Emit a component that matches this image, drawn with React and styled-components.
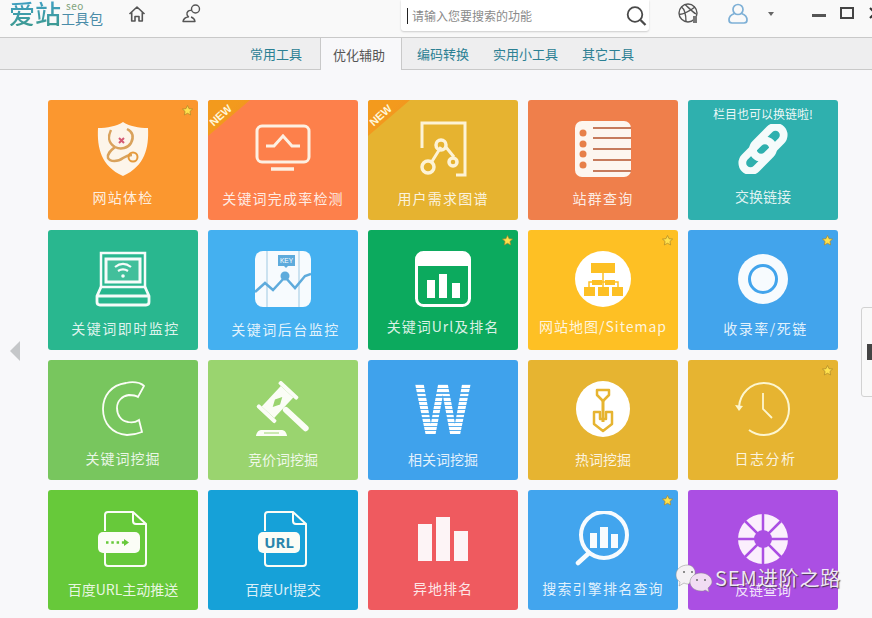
import React from 'react';
import styled, { createGlobalStyle } from 'styled-components';

const GlobalStyle = createGlobalStyle`
  html, body {
    margin: 0;
    padding: 0;
    background: #f8f8fa;
  }
  body {
    font-family: "Noto Sans CJK SC", "Noto Sans", "Liberation Sans", sans-serif;
  }
`;

const Page = styled.div`
  position: relative;
  width: 872px;
  height: 618px;
  overflow: hidden;
  background: #f8f8fa;
`;

const Header = styled.header`
  display: flex;
  align-items: flex-start;
  height: 37px;
  background: #f9f9f9;
  border-bottom: 1px solid #c9c9c9;
`;

const Logo = styled.div`
  display: flex;
  align-items: flex-start;
  flex: none;
  width: 119px;
  height: 26px;
  margin-left: 9px;
`;

const LogoMain = styled.span`
  font-size: 26px;
  line-height: 26px;
  font-weight: 500;
  background: linear-gradient(180deg, #3f9fc4, #3d9a92);
  -webkit-background-clip: text;
  background-clip: text;
  color: transparent;
`;

const LogoSide = styled.div`
  display: flex;
  flex-direction: column;
  align-items: flex-start;
`;

const LogoSeo = styled.span`
  margin-left: 5px;
  font-size: 10px;
  letter-spacing: 0.5px;
  line-height: 11px;
  color: #7da27a;
`;

const LogoSub = styled.span`
  font-size: 14px;
  line-height: 15px;
  color: #4a8ca8;
`;

const TopIcon = styled.svg`
  flex: none;
  display: block;
  margin-top: ${({ $top }) => $top}px;
  margin-left: ${({ $left }) => $left}px;
  color: ${({ $color }) => $color || '#555'};
`;

const SearchBox = styled.div`
  display: flex;
  align-items: center;
  flex: none;
  width: 248px;
  height: 31px;
  margin-left: 199px;
  padding: 0 2px 0 6px;
  box-sizing: border-box;
  background: #fff;
  border-radius: 0 0 3px 3px;
  box-shadow: 0 1px 2px rgba(0, 0, 0, 0.18);
`;

const Caret = styled.span`
  width: 1px;
  height: 16px;
  margin-right: 4px;
  background: #222;
`;

const SearchText = styled.span`
  flex: 1;
  font-size: 12px;
  line-height: 16px;
  color: #8a8a8a;
`;

const TabBar = styled.nav`
  display: flex;
  height: 31px;
  padding-left: 238px;
  background: #eeeeef;
  border-bottom: 1px solid #c9c9c9;
`;

const Tab = styled.div`
  display: flex;
  align-items: center;
  font-size: 13px;
  color: ${({ $active }) => ($active ? '#555' : '#2b8093')};
  padding: ${({ $active }) => ($active ? '0 16px 0 12px' : '0 12px')};
  margin: ${({ $active }) => ($active ? '0 3px 0 6px' : '0')};
  height: ${({ $active }) => ($active ? '32px' : '31px')};
  box-sizing: border-box;
  background: ${({ $active }) => ($active ? '#f8f8fa' : 'transparent')};
  border-left: ${({ $active }) => ($active ? '1px solid #c9c9c9' : 'none')};
  border-right: ${({ $active }) => ($active ? '1px solid #c9c9c9' : 'none')};
`;

const Grid = styled.main`
  display: grid;
  grid-template-columns: repeat(5, 150px);
  grid-auto-rows: 120px;
  gap: 10px;
  padding: 30px 0 0 48px;
`;

const Card = styled.div`
  position: relative;
  display: flex;
  flex-direction: column;
  align-items: center;
  overflow: hidden;
  padding-top: 21px;
  box-sizing: border-box;
  border-radius: 3px;
  background: ${({ $bg }) => $bg};
`;

const IconBox = styled.div`
  display: flex;
  align-items: center;
  justify-content: center;
  width: 56px;
  height: 56px;
  flex: none;
`;

const Label = styled.div`
  margin-top: ${({ $drop }) => 11 + $drop}px;
  margin-left: ${({ $shift }) => $shift}px;
  font-size: 14px;
  line-height: 20px;
  white-space: nowrap;
  letter-spacing: ${({ $spread }) => $spread}px;
  color: rgba(255, 255, 255, 0.86);
`;

const Notice = styled.div`
  position: absolute;
  top: 5px;
  left: 0;
  right: 0;
  text-align: center;
  font-size: 12px;
  line-height: 17px;
  color: rgba(255, 255, 255, 0.92);
`;

const Ribbon = styled.div`
  position: absolute;
  top: 0;
  left: 0;
  width: 42px;
  height: 36px;
  clip-path: polygon(0 0, 100% 0, 0 100%);
  background: linear-gradient(135deg, #f39a1d 40%, #ef8f24 100%);
`;

const RibbonText = styled.span`
  position: absolute;
  top: 9px;
  left: 0;
  transform: rotate(-42deg);
  font-family: "Liberation Sans", sans-serif;
  font-size: 11px;
  line-height: 13px;
  font-weight: 700;
  color: #fff6d8;
`;

const Star = styled.svg`
  position: absolute;
  top: 5px;
  right: 5px;
`;

const WordIcon = styled.span`
  display: block;
  font-family: "Liberation Sans", sans-serif;
  font-size: 72px;
  line-height: 56px;
  font-weight: 700;
  transform: scaleX(0.82);
  color: transparent;
  background: repeating-linear-gradient(180deg, #ffffff 0 2.9px, rgba(255, 255, 255, 0.15) 2.9px 4.2px);
  -webkit-background-clip: text;
  background-clip: text;
`;

const LeftArrow = styled.div`
  position: absolute;
  left: 10px;
  top: 341px;
  width: 0;
  height: 0;
  border-top: 10px solid transparent;
  border-bottom: 10px solid transparent;
  border-right: 10px solid #c5c7c9;
`;

const RightHandle = styled.div`
  position: absolute;
  left: 861px;
  top: 307px;
  width: 20px;
  height: 88px;
  border: 1px solid #d2d2d2;
  border-radius: 3px;
  background: #f9f9f9;
`;

const HandleMark = styled.span`
  position: absolute;
  left: 5px;
  top: 36px;
  width: 5px;
  height: 16px;
  background: #444;
`;

const Watermark = styled.div`
  position: absolute;
  left: 675px;
  top: 564px;
  display: flex;
  align-items: center;
  gap: 2px;
  font-size: 20px;
  line-height: 28px;
  letter-spacing: 0.9px;
  color: rgba(255, 255, 255, 0.88);
  text-shadow: 1px 1px 1px rgba(50, 50, 50, 0.8);
  white-space: nowrap;
`;

const HomeIcon = () => (
  <TopIcon $top={5} $left={0} width="18" height="18" viewBox="0 0 18 18" fill="none" stroke="currentColor" strokeWidth="1.6" strokeLinejoin="round">
    <path d="M1.5 9 9 2l7.500 7M3.700 7.500V16h3.300v-4.500h4V16h3.300V7.500" />
  </TopIcon>
);

const PeopleIcon = () => (
  <TopIcon $top={4} $left={36} width="20" height="19" viewBox="0 0 20 19" fill="none" stroke="currentColor" strokeWidth="1.4">
    <circle cx="13.500" cy="5" r="4" />
    <path d="M9.500 6.500C6.500 6 4.500 8 5 10.500c.2 1 .8 1.800 1.500 2.300C4 13.300 1.500 14.800 1 17.500h12c-.3-2.200-2-3.800-4-4.500" strokeLinejoin="round" />
  </TopIcon>
);

const SearchIcon = () => (
  <svg width="21" height="20" viewBox="0 0 21 20" fill="none" stroke="#4a4a4a" strokeWidth="1.800">
    <circle cx="9" cy="8.500" r="7.300" />
    <path d="m14.500 14 5 5" strokeWidth="2.300" />
  </svg>
);

const BallIcon = () => (
  <TopIcon $top={3} $left={29} width="21" height="21" viewBox="0 0 21 21" fill="none" stroke="#555" strokeWidth="1.400">
    <circle cx="10" cy="10" r="9" />
    <path d="M3.500 4c3 2 4.500 6 4.500 15M17 4C13 7 6 11 1 11.500M7 1.500c3 2.500 7 7 11 9.500" />
    <rect x="15" y="13" width="4" height="7" fill="#777" stroke="none" />
  </TopIcon>
);

const UserIcon = () => (
  <TopIcon $top={3} $left={29} width="20" height="21" viewBox="0 0 20 21" fill="none" stroke="#7eb0d6" strokeWidth="1.700">
    <circle cx="10" cy="6.500" r="5" />
    <path d="M6.500 10.500C3.500 11.500 1 14 1 17c0 2 1.500 3 3 3h12c1.500 0 3-1 3-3 0-3-2.500-5.500-5.500-6.500" />
  </TopIcon>
);

const CaretIcon = () => (
  <TopIcon $top={12} $left={20} width="6" height="4" viewBox="0 0 6 4">
    <path d="M0 0h6L3 4z" fill="#666" />
  </TopIcon>
);

const MinIcon = () => (
  <TopIcon $top={14} $left={38} width="14" height="3" viewBox="0 0 14 3">
    <rect width="14" height="3" fill="#555" />
  </TopIcon>
);

const MaxIcon = () => (
  <TopIcon $top={7} $left={14} width="14" height="12" viewBox="0 0 14 12" fill="none" stroke="#444" strokeWidth="2">
    <rect x="1" y="1" width="12" height="10" />
  </TopIcon>
);

const CloseIcon = () => (
  <TopIcon $top={7} $left={15} width="12" height="12" viewBox="0 0 12 12" fill="none" stroke="#333" strokeWidth="2">
    <path d="m1 1 10 10M11 1 1 11" />
  </TopIcon>
);

const StarMark = () => (
  <Star width="11" height="11" viewBox="0 0 24 24">
    <path d="m12 1 3.300 7 7.700.9-5.700 5.200 1.600 7.600L12 18l-6.900 3.700 1.600-7.600L1 8.900 8.700 8z" fill="#ffe14d" stroke="#a9862a" strokeWidth="1.500" />
  </Star>
);

const ShieldIcon = () => (
  <svg width="52" height="56" viewBox="0 0 52 56" fill="none">
    <path d="M26 1c6 4 16 6 25 6 1 20-3 38-25 48C4 45 0 27 1 7c9 0 19-2 25-6z" fill="#fdf5ea" />
    <path d="M14 9c-3 6-3 13 4 17 6 3 13 1 16-4 3-6 2-11-4-14" stroke="#d9a25c" strokeWidth="2.500" />
    <path d="M18 26c-5 4-8 7-7 11 2 4 10 4 15 0 3-2 5-3 9-3" stroke="#d9a25c" strokeWidth="2.500" />
    <circle cx="36" cy="36" r="4.500" stroke="#e59a3c" strokeWidth="2" />
    <path d="m22 17 5 5M27 17l-5 5" stroke="#d45a74" strokeWidth="2" />
  </svg>
);

const MonitorIcon = () => (
  <svg width="56" height="50" viewBox="0 0 56 50" fill="none" stroke="#fdf0e2">
    <rect x="2" y="2" width="52" height="36" rx="5" strokeWidth="3" />
    <path d="M11 22h8l9-10 9 10h8" strokeWidth="3" />
    <path d="M16 45h23" strokeWidth="3.500" />
  </svg>
);

const GraphIcon = () => (
  <svg width="47" height="56" viewBox="0 0 47 56" fill="none" stroke="#fdf3d6" strokeWidth="3">
    <path d="M2 27V2h43v52h-9" />
    <path d="m11 42 10-16M25 25l9 11" />
    <circle cx="8" cy="46" r="6" strokeWidth="3.500" />
    <circle cx="21" cy="24" r="5" strokeWidth="3.500" />
    <circle cx="33" cy="41" r="4" strokeWidth="3.500" />
  </svg>
);

const ListIcon = () => (
  <svg width="56" height="56" viewBox="0 0 56 56">
    <rect width="56" height="56" rx="7" fill="#fdf6ef" />
    {[12, 23, 33, 44].map((y) => (
      <circle key={y} cx="8" cy={y} r="3.500" fill="#e78049" />
    ))}
    {[7, 17, 28, 39, 50].map((y) => (
      <rect key={y} x="18" y={y - 1} width="38" height="2" fill="#c67b5c" />
    ))}
  </svg>
);

const ChainIcon = () => (
  <svg width="58" height="50" viewBox="0 0 58 50" fill="none" stroke="#f5fbfb" strokeWidth="8">
    <rect x="26" y="-1" width="17" height="38" rx="8.500" transform="rotate(45 34.500 18)" />
    <rect x="15" y="13" width="17" height="38" rx="8.500" transform="rotate(45 23.500 32)" />
  </svg>
);

const LaptopIcon = () => (
  <svg width="56" height="56" viewBox="0 0 56 56" fill="none" stroke="#f6fcfa" strokeWidth="2.500">
    <rect x="6" y="2" width="44" height="34" />
    <rect x="11" y="8" width="34" height="23" fill="#f6fcfa" fillOpacity="0.12" strokeWidth="3" />
    <path d="M20 16c5-4 11-4 16 0M23 20c3-2 7-2 10 0" strokeWidth="2.200" />
    <circle cx="28" cy="25" r="1.800" fill="#f6fcfa" stroke="none" />
    <path d="m6 36-4 9v6c0 2 1 3 3 3h46c2 0 3-1 3-3v-6l-4-9M2 45h52" strokeWidth="2.800" />
  </svg>
);

const ChartCardIcon = () => (
  <svg width="56" height="56" viewBox="0 0 56 56" fill="none">
    <rect width="56" height="56" rx="8" fill="#f7fbfe" />
    <path d="M12 0v56M44 0v56" stroke="#9fc9e2" strokeWidth="1" />
    <path d="M0 41 10 32l8 7 12-13 10 11 10-12 6-2" stroke="#5eabdc" strokeWidth="2.500" />
    <circle cx="30" cy="25" r="4.500" fill="#5eabdc" />
    <rect x="23" y="4" width="17" height="11" fill="#5eabdc" />
    <path d="m29 15 2 2 2-2z" fill="#5eabdc" />
    <text x="31.500" y="12" textAnchor="middle" fontSize="6.500" fontFamily="Liberation Sans" fill="#fff">KEY</text>
  </svg>
);

const BarsCardIcon = () => (
  <svg width="56" height="56" viewBox="0 0 56 56" fill="none">
    <rect x="1.500" y="1.500" width="53" height="53" rx="7" stroke="#fff" strokeWidth="3" />
    <path d="M1 15V8c0-4 3-7 7-7h40c4 0 7 3 7 7v7z" fill="#fff" />
    <rect x="12" y="29" width="8" height="18" fill="#fff" />
    <rect x="24" y="23" width="8" height="24" fill="#fff" />
    <rect x="37" y="32" width="8" height="15" fill="#fff" />
  </svg>
);

const SitemapIcon = () => (
  <svg width="56" height="56" viewBox="0 0 56 56" fill="none">
    <circle cx="28" cy="28" r="28" fill="#fff" />
    <g fill="#fdc024">
      <rect x="16" y="12" width="24" height="10" />
      <rect x="9" y="36" width="11" height="9" />
      <rect x="23" y="36" width="11" height="9" />
      <rect x="37" y="36" width="11" height="9" />
      <rect x="17" y="29" width="10" height="5" />
      <rect x="30" y="29" width="10" height="5" />
    </g>
    <path d="M28 22v6M14 36v-5h29v5M28 28v8" stroke="#fdc024" strokeWidth="1.500" />
  </svg>
);

const RingIcon = () => (
  <svg width="50" height="50" viewBox="0 0 50 50" fill="none">
    <circle cx="25" cy="25" r="25" fill="#f7fbfe" />
    <circle cx="25" cy="25" r="13.500" stroke="#42a4ec" strokeWidth="3" />
  </svg>
);

const LetterCIcon = () => (
  <svg width="44" height="56" viewBox="0 0 44 56" fill="none" stroke="#fbfdf6" strokeWidth="1.800">
    <path d="M38 2c-4-1-9-1-13 0C10 4 2 15 2 28c0 14 9 25 24 26 5 0 10-1 15-3l-3-12c-3 2-7 3-11 2-7-1-11-7-11-14 0-7 5-12 12-13 3 0 6 0 9 2l6-11c-2-2-3-2-5-3z" />
  </svg>
);

const GavelIcon = () => (
  <svg width="56" height="56" viewBox="0 0 56 56" fill="#fbfdf6">
    <g transform="rotate(43 22.500 21)">
      <path d="M14 7h17v28H14z" />
      <rect x="10" y="3" width="25" height="4" rx="1.500" />
      <rect x="10" y="35" width="25" height="4" rx="1.500" />
      <rect x="31" y="18" width="33" height="6" rx="3" />
      <path d="m22.500 14 3.500 7-3.500 7-3.500-7z" fill="#9ad46f" />
    </g>
    <path d="M1 55c0-2 2-6 5-6h21c3 0 5 4 5 6z" />
    <path d="M9 52h15" stroke="#9ad46f" strokeWidth="1" />
  </svg>
);

const ShovelIcon = () => (
  <svg width="54" height="56" viewBox="0 0 54 56" fill="none">
    <ellipse cx="27" cy="28" rx="27" ry="28" fill="#fff" />
    <path d="M21 9h12v5l-6 6-6-6z" stroke="#e6b431" strokeWidth="2.500" strokeLinejoin="round" />
    <path d="M27 20v21" stroke="#e6b431" strokeWidth="3" />
    <path d="M18 31h6v7h6v-7h6v12l-9 7-9-7z" stroke="#e6b431" strokeWidth="2.500" strokeLinejoin="round" />
  </svg>
);

const ClockIcon = () => (
  <svg width="56" height="56" viewBox="0 0 56 56" fill="none" stroke="#fdf6cf" strokeWidth="2">
    <path d="M4 26C5 12 16 2 29 2c14 0 25 12 25 26S43 54 29 54c-6 0-11-2-15-5" />
    <path d="M28 12v16l9 9" strokeWidth="1.800" />
    <path d="m0 24 4 6 4-5z" fill="#fdf6cf" stroke="none" />
  </svg>
);

const FileIcon = ({ $bg, children }) => (
  <svg width="50" height="56" viewBox="0 0 50 56" fill="none">
    <path d="M7 20V4c0-2 1-3 3-3h25l13 12v39c0 2-1 3-3 3H10c-2 0-3-1-3-3V41" stroke="#fbfdf6" strokeWidth="2" fill={$bg} />
    <path d="M35 1v9c0 2 1 3 3 3h10" stroke="#fbfdf6" strokeWidth="2" />
    <rect y="21" width="42" height="21" rx="5" fill="#fbfdf6" />
    {children}
  </svg>
);

const BarsIcon = () => (
  <svg width="50" height="44" viewBox="0 0 50 44" fill="#fdf4f6">
    <rect y="7" width="14" height="37" />
    <rect x="18" width="14" height="44" />
    <rect x="36" y="14" width="14" height="30" />
  </svg>
);

const LensIcon = () => (
  <svg width="56" height="56" viewBox="0 0 56 56" fill="none">
    <circle cx="29" cy="24" r="23" stroke="#f7fbfe" strokeWidth="4" />
    <path d="M14 42 3 52" stroke="#f7fbfe" strokeWidth="4.500" strokeLinecap="round" />
    <g fill="#f7fbfe">
      <rect x="15" y="22" width="7" height="15" />
      <rect x="25" y="16" width="8" height="21" />
      <rect x="36" y="23" width="7" height="14" />
    </g>
  </svg>
);

const WheelIcon = () => (
  <svg width="50" height="50" viewBox="0 0 50 50" fill="none">
    <circle cx="25" cy="25" r="25" fill="#fbeffd" />
    <path d="M0 25h50M25 0v50M7 7l36 36M43 7 7 43" stroke="#ab4fe3" strokeWidth="2.500" />
    <circle cx="25" cy="25" r="9" fill="#ab4fe3" />
  </svg>
);

const WeChatIcon = () => (
  <svg width="38" height="28" viewBox="0 0 38 28">
    <path d="M13 1C6 1 1 5 1 11c0 3 1 5 4 7l-1 4 5-3c2 1 3 1 5 1l6-10c1-5-3-9-7-9z" fill="#f4f1f4" stroke="#8b8b8b" strokeWidth="0.500" />
    <path d="M26 9c-6 0-11 4-11 9s5 9 11 9c2 0 3 0 4-1l4 2-1-4c2-2 4-4 4-6 0-5-5-9-11-9z" fill="#f1dcf3" stroke="#8b8b8b" strokeWidth="0.500" />
    <g fill="#6b6b6b">
      <circle cx="9" cy="8" r="1" />
      <circle cx="17" cy="8" r="1" />
      <circle cx="22" cy="16" r="1" />
      <circle cx="30" cy="16" r="1" />
    </g>
  </svg>
);

const cards = [
  { name: '网站体检', bg: '#fb972f', icon: <ShieldIcon />, spread: 1.2, drop: -1, star: true },
  { name: '关键词完成率检测', bg: '#fd804b', icon: <MonitorIcon />, spread: 1.2, isNew: true },
  { name: '用户需求图谱', bg: '#e6b330', icon: <GraphIcon />, spread: 1.2, isNew: true },
  { name: '站群查询', bg: '#ef7f4b', icon: <ListIcon />, spread: 1.2 },
  { name: '交换链接', bg: '#2fb0ae', icon: <ChainIcon />, spread: 0, drop: -2, notice: '栏目也可以换链啦!' },
  { name: '关键词即时监控', bg: '#29b78f', icon: <LaptopIcon />, spread: 1.5, shift: 5 },
  { name: '关键词后台监控', bg: '#44b0f0', icon: <ChartCardIcon />, spread: 1.5, drop: 1, shift: 5 },
  { name: '关键词Url及排名', bg: '#0caa5e', icon: <BarsCardIcon />, spread: 1, drop: -2, star: true },
  { name: '网站地图/Sitemap', bg: '#fec024', icon: <SitemapIcon />, spread: 1, drop: -2, star: true },
  { name: '收录率/死链', bg: '#42a4ec', icon: <RingIcon />, spread: 1.5, shift: 5, star: true },
  { name: '关键词挖掘', bg: '#78c65e', icon: <LetterCIcon />, spread: 1 },
  { name: '竞价词挖掘', bg: '#9ad46f', icon: <GavelIcon />, spread: 0, drop: 1 },
  { name: '相关词挖掘', bg: '#3fa2ec', icon: <WordIcon>W</WordIcon>, spread: 0, drop: 1 },
  { name: '热词挖掘', bg: '#e6b431', icon: <ShovelIcon />, spread: 0, drop: 1 },
  { name: '日志分析', bg: '#e6b431', icon: <ClockIcon />, spread: 1.5, shift: 5, star: true },
  {
    name: '百度URL主动推送',
    bg: '#67c93a',
    spread: 0,
    drop: 1,
    icon: (
      <FileIcon $bg="#67c93a">
        <path d="M8 31.500h18" stroke="#67c93a" strokeWidth="2.500" strokeDasharray="2.500 2.800" />
        <path d="m26 28 5 3.500-5 3.500z" fill="#67c93a" />
      </FileIcon>
    ),
  },
  {
    name: '百度Url提交',
    bg: '#16a1d8',
    spread: 0,
    drop: 1,
    icon: (
      <FileIcon $bg="#16a1d8">
        <text x="21" y="37" textAnchor="middle" fontSize="15" fontWeight="700" fontFamily="Noto Sans" fill="#2a86ad">URL</text>
      </FileIcon>
    ),
  },
  { name: '异地排名', bg: '#ef5a5f', icon: <BarsIcon />, spread: 1 },
  { name: '搜索引擎排名查询', bg: '#42a5ee', icon: <LensIcon />, spread: 1.2, star: true },
  { name: '反链查询', bg: '#ab4fe3', icon: <WheelIcon />, spread: 0, drop: 1 },
];

const ToolCard = ({ card }) => (
  <Card $bg={card.bg}>
    {card.notice && <Notice>{card.notice}</Notice>}
    {card.isNew && (
      <>
        <Ribbon />
        <RibbonText>NEW</RibbonText>
      </>
    )}
    {card.star && <StarMark />}
    <IconBox>{card.icon}</IconBox>
    <Label $spread={card.spread} $drop={card.drop || 0} $shift={card.shift || 0}>{card.name}</Label>
  </Card>
);

const tabs = ['常用工具', '优化辅助', '编码转换', '实用小工具', '其它工具'];

const App = () => {
  return (
    <Page>
      <GlobalStyle />
      <Header>
        <Logo>
          <LogoMain>爱站</LogoMain>
          <LogoSide>
            <LogoSeo>seo</LogoSeo>
            <LogoSub>工具包</LogoSub>
          </LogoSide>
        </Logo>
        <HomeIcon />
        <PeopleIcon />
        <SearchBox>
          <Caret />
          <SearchText>请输入您要搜索的功能</SearchText>
          <SearchIcon />
        </SearchBox>
        <BallIcon />
        <UserIcon />
        <CaretIcon />
        <MinIcon />
        <MaxIcon />
        <CloseIcon />
      </Header>
      <TabBar>
        {tabs.map((tab, i) => (
          <Tab key={tab} $active={i === 1}>{tab}</Tab>
        ))}
      </TabBar>
      <Grid>
        {cards.map((card) => (
          <ToolCard key={card.name} card={card} />
        ))}
      </Grid>
      <LeftArrow />
      <RightHandle>
        <HandleMark />
      </RightHandle>
      <Watermark>
        <WeChatIcon />
        <span>SEM进阶之路</span>
      </Watermark>
    </Page>
  );
};

export default App;
